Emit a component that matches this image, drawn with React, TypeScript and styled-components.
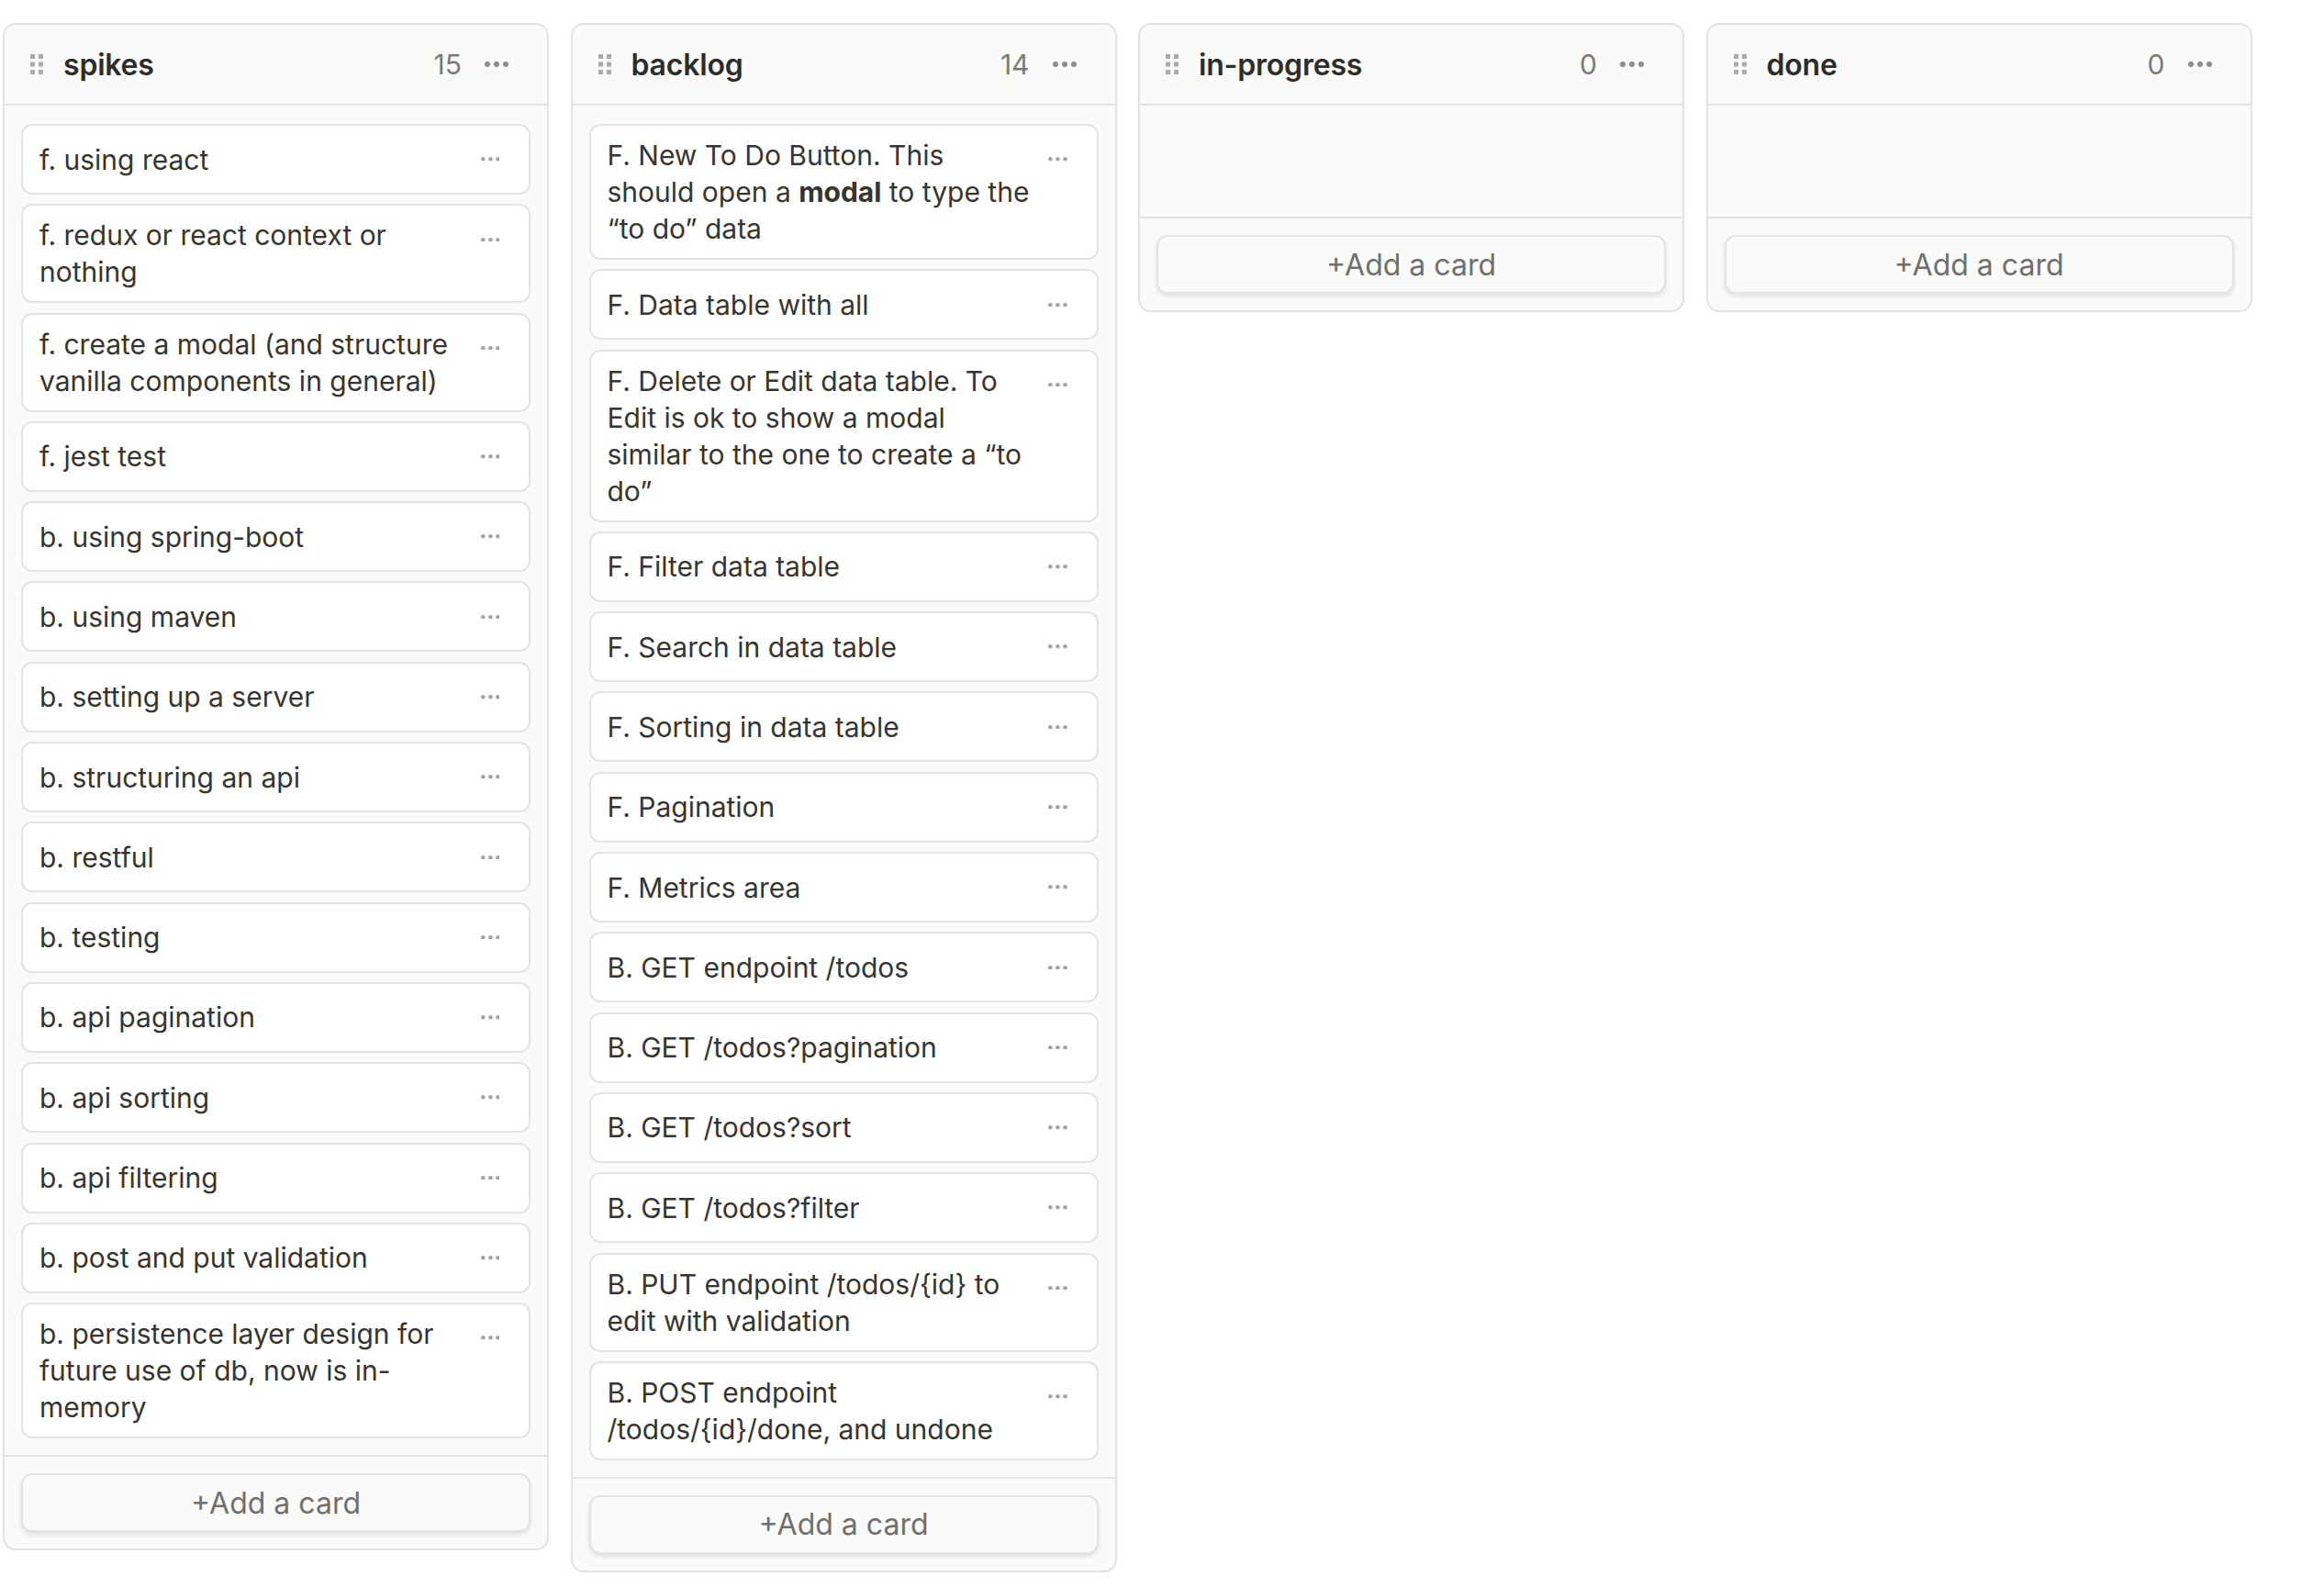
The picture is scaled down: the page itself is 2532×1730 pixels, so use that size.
import React from 'react'
import styled, { createGlobalStyle } from 'styled-components'

type Card = {
    id: string
    content: React.ReactNode
}

type Lane = {
    id: string
    title: string
    cards: Card[]
}

const GlobalStyle = createGlobalStyle`
    html, body {
        margin: 0;
        padding: 0;
        background: #ffffff;
    }
    body {
        font-family: Inter, "Noto Sans", "Liberation Sans", sans-serif;
        color: #37352f;
        -webkit-font-smoothing: antialiased;
    }
`

const Board = styled.main`
    display: flex;
    align-items: flex-start;
    gap: 23.5px;
    padding: 25px 0 0 3px;
`

const Column = styled.section`
    width: 595px;
    box-sizing: border-box;
    display: flex;
    flex-direction: column;
    background: #fafaf9;
    border: 2px solid #e3e3e2;
    border-radius: 14px;
`

const Header = styled.header`
    height: 86px;
    display: flex;
    align-items: center;
    padding: 0 35px 0 28px;
    border-bottom: 2px solid #e3e3e2;
`

const Handle = styled.svg`
    width: 14px;
    height: 22px;
    flex: none;
    margin-right: 22px;
`

const Title = styled.h2`
    margin: 0;
    flex: 1;
    font-size: 32px;
    font-weight: 600;
    color: #2c2c2b;
    letter-spacing: -0.2px;
`

const Count = styled.span`
    font-size: 30px;
    color: #7a7a78;
    margin-right: 18px;
`

const DotsButton = styled.button<{ $small?: boolean }>`
    flex: none;
    display: flex;
    align-items: center;
    justify-content: center;
    width: ${p => (p.$small ? '48px' : '40px')};
    height: ${p => (p.$small ? '49px' : '40px')};
    padding: 0;
    border: 0;
    background: transparent;
    color: ${p => (p.$small ? '#a3a3a1' : '#8c8c8a')};
    align-self: ${p => (p.$small ? 'flex-start' : 'center')};
`

const CardList = styled.div`
    display: flex;
    flex-direction: column;
    gap: 10.3px;
    min-height: 121px;
    box-sizing: border-box;
    padding: 20px 18px 18px;
`

const CardBox = styled.article`
    display: flex;
    align-items: center;
    background: #ffffff;
    border: 2px solid #e3e3e2;
    border-radius: 12px;
    padding: 12px 18px;
`

const CardText = styled.p`
    flex: 1;
    margin: 0;
    font-size: 30px;
    line-height: 40px;
    color: #37352f;
    b {
        font-weight: 700;
    }
`

const Footer = styled.footer`
    border-top: 2px solid #e3e3e2;
    padding: 18px;
`

const AddButton = styled.button`
    width: 100%;
    height: 64px;
    border: 2px solid #e3e3e2;
    border-radius: 12px;
    background: #fafaf9;
    box-shadow: 0 3px 5px rgba(0, 0, 0, 0.1);
    font-family: inherit;
    font-size: 32px;
    color: #6f6f6d;
`

const Dots = ({ r, gap }: { r: number; gap: number }) => {
    const w = r * 6 + gap * 2
    return (
        <svg width={w} height={r * 2} viewBox={`0 0 ${w} ${r * 2}`}>
            {[0, 1, 2].map(i => (
                <circle key={i} cx={r + i * (2 * r + gap)} cy={r} r={r} fill='currentColor' />
            ))}
        </svg>
    )
}

const DragHandle = () => (
    <Handle viewBox='0 0 14 22'>
        {[0, 8.5, 17].map(y =>
            [0, 9].map(x => <rect key={`${x}-${y}`} x={x} y={y} width='5' height='5' fill='#aaaaa8' />)
        )}
    </Handle>
)

const lanes: Lane[] = [
    {
        id: 'spikes',
        title: 'spikes',
        cards: [
            'f. using react',
            'f. redux or react context or nothing',
            'f. create a modal (and structure vanilla components in general)',
            'f. jest test',
            'b. using spring-boot',
            'b. using maven',
            'b. setting up a server',
            'b. structuring an api',
            'b. restful',
            'b. testing',
            'b. api pagination',
            'b. api sorting',
            'b. api filtering',
            'b. post and put validation',
            'b. persistence layer design for future use of db, now is in-memory',
        ].map((t, i) => ({ id: `s${i}`, content: t })),
    },
    {
        id: 'backlog',
        title: 'backlog',
        cards: [
            <>F. New To Do Button. This should open a <b>modal</b> to type the “to do” data</>,
            'F. Data table with all',
            'F. Delete or Edit data table. To Edit is ok to show a modal similar to the one to create a “to do”',
            'F. Filter data table',
            'F. Search in data table',
            'F. Sorting in data table',
            'F. Pagination',
            'F. Metrics area',
            'B. GET endpoint /todos',
            'B. GET /todos?pagination',
            'B. GET /todos?sort',
            'B. GET /todos?filter',
            'B. PUT endpoint /todos/{id} to edit with validation',
            'B. POST endpoint /todos/{id}/done, and undone',
        ].map((t, i) => ({ id: `b${i}`, content: t })),
    },
    { id: 'in-progress', title: 'in-progress', cards: [] },
    { id: 'done', title: 'done', cards: [] },
]

const LaneColumn = ({ lane }: { lane: Lane }) => (
    <Column>
        <Header>
            <DragHandle />
            <Title>{lane.title}</Title>
            <Count>{lane.cards.length}</Count>
            <DotsButton>
                <Dots r={3} gap={4} />
            </DotsButton>
        </Header>
        <CardList>
            {lane.cards.map(card => (
                <CardBox key={card.id}>
                    <CardText>{card.content}</CardText>
                    <DotsButton $small>
                        <Dots r={2.3} gap={3.5} />
                    </DotsButton>
                </CardBox>
            ))}
        </CardList>
        <Footer>
            <AddButton>+Add a card</AddButton>
        </Footer>
    </Column>
)

const App = () => (
    <>
        <GlobalStyle />
        <Board>
            {lanes.map(lane => (
                <LaneColumn key={lane.id} lane={lane} />
            ))}
        </Board>
    </>
)

export default App
